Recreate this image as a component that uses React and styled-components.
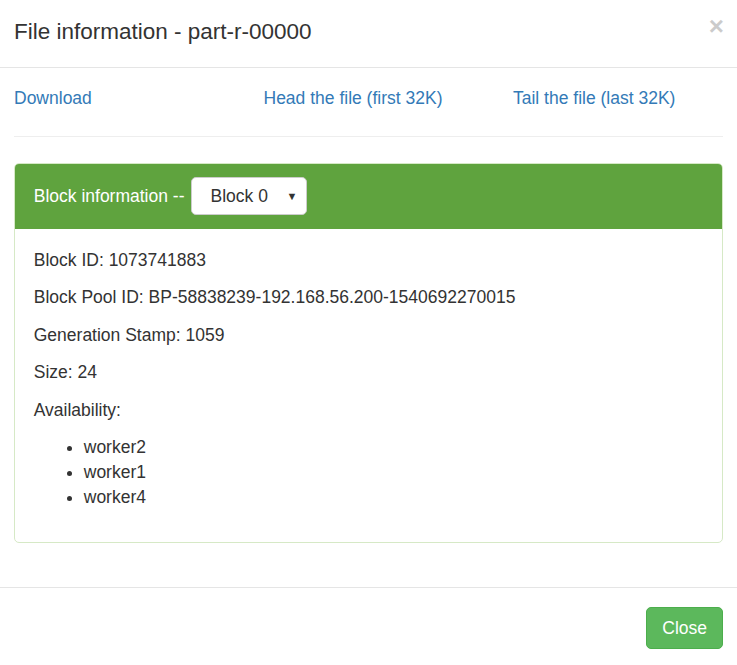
import React from "react";
import styled, { createGlobalStyle } from "styled-components";

const GlobalStyle = createGlobalStyle`
  html, body {
    margin: 0;
    padding: 0;
    background: #fff;
  }
  body {
    font-family: "Liberation Sans", Arial, Helvetica, sans-serif;
    font-size: 17.5px;
    line-height: 25px;
    color: #333;
  }
`;

const Modal = styled.div`
  width: 737px;
  height: 665px;
  background: #fff;
  overflow: hidden;
`;

const Header = styled.div`
  display: flex;
  justify-content: space-between;
  align-items: flex-start;
  padding: 16px 14px 19px 14px;
  border-bottom: 1px solid #e5e5e5;
`;

const Title = styled.h4`
  margin: 0;
  font-size: 22.5px;
  font-weight: 400;
  line-height: 32px;
  color: #333;
`;

const CloseX = styled.button`
  background: none;
  border: none;
  padding: 0;
  margin-top: -3px;
  margin-right: -1px;
  font-family: "Liberation Sans", Arial, sans-serif;
  font-size: 26px;
  font-weight: bold;
  line-height: 26px;
  color: #000;
  opacity: 0.2;
  cursor: pointer;
`;

const Body = styled.div`
  padding: 18px 14px 18.75px 14px;
`;

const LinkRow = styled.div`
  display: grid;
  grid-template-columns: repeat(3, 1fr);
  column-gap: 39.5px;
`;

const Link = styled.a`
  color: #337ab7;
  text-decoration: none;
  cursor: pointer;
`;

const Rule = styled.hr`
  margin: 25px 0 26px 0;
  border: 0;
  border-top: 1px solid #eee;
`;

const Panel = styled.div`
  border: 1px solid #d6e9c6;
  border-radius: 5px;
  margin-bottom: 26px;
  overflow: hidden;
`;

const PanelHeading = styled.div`
  display: flex;
  align-items: center;
  padding: 13px 18.75px 14px 18.75px;
  background: #5fa33e;
  color: #fff;
`;

const HeadingText = styled.span`
  margin-right: 6px;
`;

const SelectWrap = styled.div`
  position: relative;
  width: 116px;
  height: 38px;
`;

const Select = styled.select`
  appearance: none;
  -webkit-appearance: none;
  width: 100%;
  height: 100%;
  padding: 0 0 0 19px;
  border: 1px solid #ccc;
  border-radius: 5px;
  background: #fff;
  color: #333;
  font-family: "Liberation Sans", Arial, sans-serif;
  font-size: 17.5px;
  outline: none;
`;

const Arrow = styled.span`
  position: absolute;
  right: 9px;
  top: 50%;
  transform: translateY(-50%);
  font-size: 11px;
  color: #333;
  pointer-events: none;
`;

const PanelBody = styled.div`
  padding: 18.75px;
`;

const Para = styled.p`
  margin: 0 0 12.5px 0;
`;

const List = styled.ul`
  margin: 0 0 12.5px 0;
  padding-left: 50px;
`;

const Footer = styled.div`
  display: flex;
  justify-content: flex-end;
  padding: 18.75px 14px;
  border-top: 1px solid #e5e5e5;
`;

const Button = styled.button`
  padding: 7.5px 15px;
  font-family: "Liberation Sans", Arial, sans-serif;
  font-size: 17.5px;
  line-height: 25px;
  color: #fff;
  background: #5cb85c;
  border: 1px solid #4cae4c;
  border-radius: 5px;
  cursor: pointer;
`;

const block = {
  id: "1073741883",
  pool: "BP-58838239-192.168.56.200-1540692270015",
  stamp: "1059",
  size: "24",
  hosts: ["worker2", "worker1", "worker4"],
};

export default function App() {
  return (
    <>
      <GlobalStyle />
      <Modal>
        <Header>
          <Title>File information - part-r-00000</Title>
          <CloseX>×</CloseX>
        </Header>
        <Body>
          <LinkRow>
            <Link>Download</Link>
            <Link>Head the file (first 32K)</Link>
            <Link>Tail the file (last 32K)</Link>
          </LinkRow>
          <Rule />
          <Panel>
            <PanelHeading>
              <HeadingText>Block information --</HeadingText>
              <SelectWrap>
                <Select defaultValue="0">
                  <option value="0">Block 0</option>
                </Select>
                <Arrow>▼</Arrow>
              </SelectWrap>
            </PanelHeading>
            <PanelBody>
              <Para>Block ID: {block.id}</Para>
              <Para>Block Pool ID: {block.pool}</Para>
              <Para>Generation Stamp: {block.stamp}</Para>
              <Para>Size: {block.size}</Para>
              <Para>Availability:</Para>
              <List>
                {block.hosts.map((h) => (
                  <li key={h}>{h}</li>
                ))}
              </List>
            </PanelBody>
          </Panel>
        </Body>
        <Footer>
          <Button>Close</Button>
        </Footer>
      </Modal>
    </>
  );
}
